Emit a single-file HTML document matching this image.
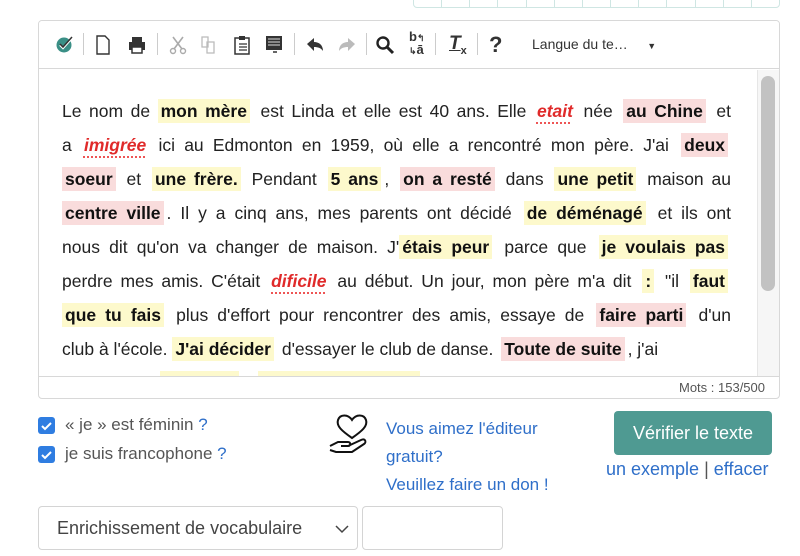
<!DOCTYPE html>
<html><head><meta charset="utf-8"><style>
*{box-sizing:border-box;margin:0;padding:0}
body{width:800px;height:556px;background:#fff;font-family:"Liberation Sans",Arial,sans-serif;position:relative;overflow:hidden;color:#222}
.top{position:absolute;left:413px;top:-6px;width:367px;height:14px;border:1px solid #cfe6e3;border-radius:4px;display:flex}
.top div{flex:1;border-right:1px solid #cfe6e3}
.ed{position:absolute;left:38px;top:20px;width:742px;height:379px;border:1px solid #d8d8d8;border-radius:4px;overflow:hidden}
.tb{position:absolute;left:0;top:0;width:100%;height:48px;border-bottom:1px solid #d8d8d8;background:#fff}
.ic{position:absolute;top:14px}
.sep{position:absolute;top:12px;width:1px;height:22px;background:#ccc}
.content{position:absolute;left:0;top:49px;width:740px;height:306px;overflow:hidden}
.ln{position:absolute;left:23px;width:669px;font-size:17.5px;line-height:24px;text-align:justify;text-align-last:justify;white-space:normal;height:24px;overflow:visible}
.y{background:#fdf9cc;font-weight:bold;color:#111;padding:2px 3px;margin:0 3px}
.p{background:#f9dcdc;font-weight:bold;color:#111;padding:2px 3px;margin:0 3px}
.r{color:#e02a2a;font-weight:bold;font-style:italic;text-decoration:underline dotted #e55;text-underline-offset:5px;text-decoration-thickness:2px;margin:0 3px}
.ln>.y:first-child,.ln>.p:first-child{margin-left:0}
.sb{position:absolute;left:722px;top:55px;width:14px;height:215px;background:#c2c2c2;border-radius:7px}
.sbt{position:absolute;left:718px;top:49px;width:22px;height:306px;background:#f6f6f6;border-left:1px solid #e6e6e6}
.ft{position:absolute;left:0;top:355px;width:100%;height:24px;border-top:1px solid #d8d8d8;font-size:13px;color:#555;text-align:right;padding-right:14px;line-height:22px}
.cb{position:absolute;left:38px;width:17px;height:17px;background:#2f7de1;border-radius:3px}
.lbl{position:absolute;left:65px;font-size:17px;color:#555}
.q{color:#2f6fc9}
.lk{color:#2f6fc9;text-decoration:none}
</style></head><body>
<div class="top"><div></div><div></div><div></div><div></div><div></div><div></div><div></div><div></div><div></div><div></div><div></div><div></div><div style="border:none"></div></div>
<div class="ed">
<div class="tb">
<svg class="ic" style="left:16px;top:13px" width="20" height="20" viewBox="0 0 20 20"><circle cx="9" cy="11" r="7.5" fill="#3a8f86"/><path d="M5 11l3 3 9-10" stroke="#fff" stroke-width="2.2" fill="none"/><path d="M5 10l3 3 9-10" stroke="#333" stroke-width="1.5" fill="none"/></svg>
<div class="sep" style="left:44px"></div>
<svg class="ic" style="left:56px" width="16" height="20" viewBox="0 0 16 20"><path d="M2 1h8l4 4v14H2z" fill="none" stroke="#333" stroke-width="1.4"/></svg>
<svg class="ic" style="left:88px" width="20" height="20" viewBox="0 0 20 20"><rect x="5" y="2" width="10" height="5" fill="#333"/><rect x="2" y="7" width="16" height="8" fill="#333"/><rect x="5" y="12" width="10" height="6" fill="#fff" stroke="#333" stroke-width="1.5"/></svg>
<div class="sep" style="left:118px"></div>
<svg class="ic" style="left:130px" width="18" height="20" viewBox="0 0 18 20"><path d="M4 2l9 12M14 2L5 14" stroke="#aaa" stroke-width="1.6"/><circle cx="4" cy="16" r="2.5" fill="none" stroke="#aaa" stroke-width="1.4"/><circle cx="14" cy="16" r="2.5" fill="none" stroke="#aaa" stroke-width="1.4"/></svg>
<svg class="ic" style="left:160px" width="18" height="20" viewBox="0 0 18 20"><path d="M3 2h6v10H3zM8 7h7v11H8z" fill="#fff" stroke="#bbb" stroke-width="1.3"/></svg>
<svg class="ic" style="left:194px" width="18" height="20" viewBox="0 0 18 20"><rect x="2" y="3" width="14" height="16" fill="none" stroke="#333" stroke-width="1.5"/><rect x="6" y="1" width="6" height="4" fill="#333"/><path d="M6 9h8M6 12h8M6 15h8" stroke="#333" stroke-width="1.3"/></svg>
<svg class="ic" style="left:226px" width="18" height="20" viewBox="0 0 18 20"><rect x="1" y="1" width="16" height="14" fill="#333"/><path d="M3 4h12M3 7h12M3 10h12" stroke="#ddd" stroke-width="1"/><path d="M8 17h4" stroke="#333" stroke-width="1.5"/></svg>
<div class="sep" style="left:255px"></div>
<svg class="ic" style="left:266px" width="20" height="20" viewBox="0 0 20 20"><path d="M2 9l7-6v4c5 0 9 3 9 9-2-3-5-4-9-4v4z" fill="#333"/></svg>
<svg class="ic" style="left:298px" width="20" height="20" viewBox="0 0 20 20"><path d="M18 9l-7-6v4c-5 0-9 3-9 9 2-3 5-4 9-4v4z" fill="#bbb"/></svg>
<div class="sep" style="left:327px"></div>
<svg class="ic" style="left:336px" width="20" height="20" viewBox="0 0 20 20"><circle cx="8" cy="8" r="5.5" fill="none" stroke="#222" stroke-width="2.4"/><path d="M12 12l6 6" stroke="#222" stroke-width="3"/></svg>
<div class="ic" style="left:370px;top:10px;font-size:13px;line-height:12px;color:#333;font-weight:bold">b<span style="font-size:9px">↰</span><br><span style="font-size:9px">↳</span>ā</div>
<div class="sep" style="left:396px"></div>
<div class="ic" style="left:410px;top:12px;font-size:19px;font-style:italic;font-weight:bold;color:#333;text-decoration:underline">T<sub style="font-size:11px;font-style:normal">x</sub></div>
<div class="sep" style="left:438px"></div>
<div class="ic" style="left:450px;top:11px;font-size:22px;font-weight:bold;color:#333">?</div>
<div class="ic" style="left:493px;top:15px;font-size:14px;color:#333">Langue du te…&nbsp;&nbsp;&nbsp;&nbsp;&nbsp;<span style="font-size:9px">▼</span></div>
</div>
<div class="content">
<div class="ln" style="top:29px">Le nom de <span class="y">mon mère</span> est Linda et elle est 40 ans. Elle <span class="r">etait</span> née <span class="p">au Chine</span> et</div>
<div class="ln" style="top:63px">a <span class="r">imigrée</span> ici au Edmonton en 1959, où elle a rencontré mon père. J'ai <span class="p">deux</span></div>
<div class="ln" style="top:97px"><span class="p">soeur</span> et <span class="y">une frère.</span> Pendant <span class="y">5 ans</span>, <span class="p">on a resté</span> dans <span class="y">une petit</span> maison au</div>
<div class="ln" style="top:131px"><span class="p">centre ville</span>. Il y a cinq ans, mes parents ont décidé <span class="y">de déménagé</span> et ils ont</div>
<div class="ln" style="top:165px">nous dit qu'on va changer de maison. J'<span class="y">étais peur</span> parce que <span class="y">je voulais pas</span></div>
<div class="ln" style="top:199px">perdre mes amis. C'était <span class="r">dificile</span> au début. Un jour, mon père m'a dit <span class="y">:</span> "il <span class="y">faut</span></div>
<div class="ln" style="top:233px"><span class="y">que tu fais</span> plus d'effort pour rencontrer des amis, essaye de <span class="p">faire parti</span> d'un</div>
<div class="ln" style="top:267px;text-align-last:left">club à l'école. <span class="y">J'ai décider</span> d'essayer le club de danse. <span class="p">Toute de suite</span>, j'ai</div>
<div class="ln" style="top:301px">commencé <span class="y">un amis</span> <span class="y">Depuis ce jour-là</span> mes amies sont venus chez nous</div>
</div>
<div class="sbt"></div><div class="sb"></div>
<div class="ft">Mots : 153/500</div>
</div>
<div class="cb" style="top:417px"><svg width="17" height="17"><path d="M4 9l3 3 6-6" stroke="#fff" stroke-width="2" fill="none"/></svg></div>
<div class="lbl" style="top:415px">« je » est féminin <span class="q">?</span></div>
<div class="cb" style="top:446px"><svg width="17" height="17"><path d="M4 9l3 3 6-6" stroke="#fff" stroke-width="2" fill="none"/></svg></div>
<div class="lbl" style="top:444px">je suis francophone <span class="q">?</span></div>
<svg style="position:absolute;left:328px;top:411px" width="46" height="48" viewBox="0 0 46 48"><path d="M24 27C14 20 8 15 10 9c2-6 10-6 14 0 4-6 12-6 14 0 2 6-4 11-14 18z" fill="none" stroke="#111" stroke-width="2"/><path d="M2 35l8-4h10c3 0 3 4 0 4h-7M20 35l13-6c4-2 6 2 3 4l-12 8H8l-6-2" fill="none" stroke="#111" stroke-width="2"/></svg>
<div style="position:absolute;left:386px;top:415px;font-size:17px;line-height:28px" class="lk">Vous aimez l'éditeur<br>gratuit?<br>Veuillez faire un don !</div>
<div style="position:absolute;left:614px;top:411px;width:158px;height:44px;background:#4f9a92;border-radius:4px;color:#fff;font-size:18px;text-align:center;line-height:44px">Vérifier le texte</div>
<div style="position:absolute;left:606px;top:459px;font-size:18px" class="lk">un exemple <span style="color:#555">|</span> effacer</div>
<div style="position:absolute;left:38px;top:506px;width:320px;height:44px;border:1px solid #d4d4d4;border-radius:4px;font-size:18px;color:#444;padding:11px 0 0 18px">Enrichissement de vocabulaire<svg style="position:absolute;right:8px;top:17px" width="14" height="10"><path d="M1 2l6 6 6-6" stroke="#444" stroke-width="1.5" fill="none"/></svg></div>
<div style="position:absolute;left:362px;top:506px;width:141px;height:44px;border:1px solid #d4d4d4;border-radius:4px"></div>
</body></html>
